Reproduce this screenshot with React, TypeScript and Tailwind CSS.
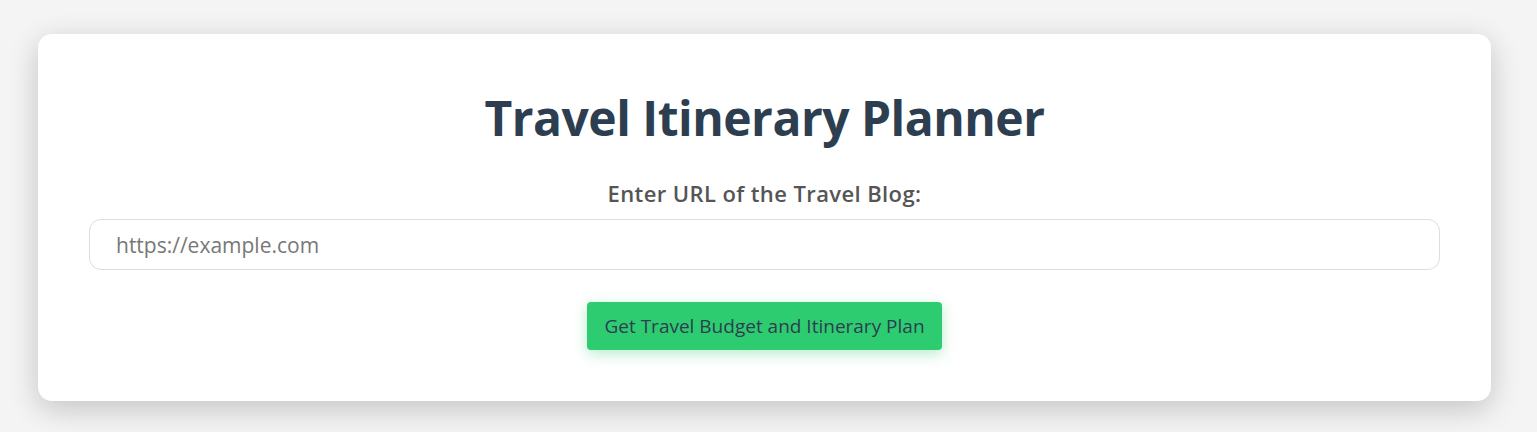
import React from 'react';

const App: React.FC = () => {
  return (
    <div className="min-h-[432px] bg-[#f4f4f4] pt-[34px] font-['Open_Sans','Noto_Sans',sans-serif]">
      <div className="ml-[38px] w-[1453px] rounded-[14px] bg-white px-[51px] pt-[50px] pb-[51px] shadow-[0_8px_30px_rgba(0,0,0,0.2)]">
        <h1 className="text-center text-[48px] leading-[68px] font-bold tracking-[-0.5px] text-[#2c3e50]">
          Travel Itinerary Planner
        </h1>
        <label className="mt-[27px] block text-center text-[22px] leading-[28px] font-semibold tracking-[0.4px] text-[#555555]">
          Enter URL of the Travel Blog:
        </label>
        <input
          type="text"
          placeholder="https://example.com"
          className="mt-[12px] block h-[51px] w-full rounded-[12px] border border-[#dddddd] px-[26px] text-[21px] text-[#333] outline-none placeholder:text-[#777777]"
        />
        <div className="mt-[32px] flex justify-center">
          <button className="h-[48px] rounded-[4px] bg-[#2ecc71] px-[17px] text-[19px] text-[#2c3e50] shadow-[0_4px_14px_rgba(46,204,113,0.35)]">
            Get Travel Budget and Itinerary Plan
          </button>
        </div>
      </div>
    </div>
  );
};

export default App;
